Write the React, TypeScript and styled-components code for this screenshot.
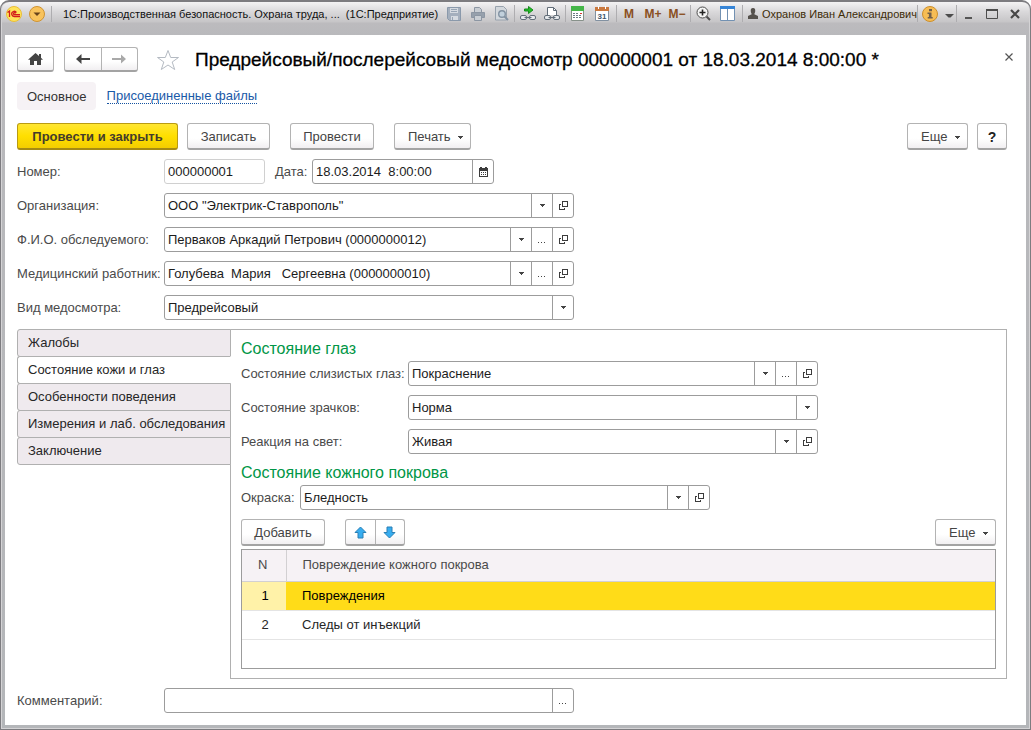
import React, { useState } from "react";
import styled, { createGlobalStyle, css } from "styled-components";

const GlobalStyle = createGlobalStyle`
  *, *::before, *::after { box-sizing: border-box; }
  html, body { margin: 0; padding: 0; background: #fff; }
  body, button, input, select, table {
    font-family: "Liberation Sans", Arial, sans-serif;
    font-size: 13px;
    line-height: 16px;
  }
  button, input, select { margin: 0; }
  svg { display: block; }
`;

/* ---------- window frame ---------- */

const Frame = styled.div`
  min-height: 100vh;
  display: flex;
  flex-direction: column;
  padding: 0 4px 4px;
  border: 1px solid #7d7c80;
  border-top-width: 2px;
  border-radius: 9px 9px 0 0;
  background: linear-gradient(#f4f3f4 0, #d9d8da 10px, #c6c5c7 20px, #bcbbbe 21px, #b9b9bc 33px, #b4b6b9 100%);
  box-shadow: inset 1px 0 0 #d4d3d5, inset -1px -1px 0 #d4d3d5;
`;

const TitleBar = styled.header`
  display: flex;
  align-items: center;
  height: 33px;
  padding-bottom: 10px;
  color: #111;
  font-size: 11px;
  line-height: 16px;
`;

const Brand = styled.div`
  display: flex;
  align-items: center;
  gap: 7px;
  padding: 0 6px 0 1px;
  border-right: 1px solid #aeadb0;
`;

const WindowTitle = styled.div`
  flex: 1;
  min-width: 0;
  padding-left: 11px;
  overflow: hidden;
  white-space: pre;
`;

const ToolGroup = styled.div<{ $before?: number; $after?: number }>`
  display: flex;
  align-items: center;
  height: 17px;
  padding: 0 ${(p) => p.$after ?? 0}px 0 ${(p) => p.$before ?? 0}px;
  border-right: 1px solid #aeadb0;
`;

const ToolButton = styled.button<{ $w?: number }>`
  display: flex;
  align-items: center;
  justify-content: center;
  width: ${(p) => p.$w ?? 24}px;
  height: 18px;
  padding: 0;
  border: 0;
  background: none;
  color: #8a4f22;
  font-size: 12px;
  font-weight: bold;
  line-height: 16px;
`;

const UserButton = styled.button`
  display: flex;
  align-items: center;
  gap: 4px;
  padding: 0 0 0 5px;
  border: 0;
  background: none;
  color: #3d2c08;
  font-size: 11px;
  white-space: nowrap;
`;

const WindowControls = styled.div`
  display: flex;
`;

const Content = styled.main`
  flex: 1;
  display: flex;
  flex-direction: column;
  padding: 12px 19px 12px 12px;
  background: #fff;
`;

/* ---------- header of the form ---------- */

const HeadRow = styled.div`
  display: flex;
  align-items: center;
  height: 25px;
`;

const raised = css`
  border: 1px solid #b3b3b3;
  border-bottom: 2px solid #a3a3a3;
  border-radius: 3px;
  background: linear-gradient(#fff 0, #fff 60%, #f1eff1 100%);
  color: #444;
`;

const IconButton = styled.button`
  ${raised}
  display: flex;
  align-items: center;
  justify-content: center;
  width: 37px;
  height: 25px;
  padding: 0;
`;

const Segment = styled.div<{ $tall?: boolean }>`
  ${raised}
  display: flex;
  width: ${(p) => (p.$tall ? 60 : 74)}px;
  height: ${(p) => (p.$tall ? 27 : 25)}px;
  margin-left: ${(p) => (p.$tall ? 20 : 10)}px;
`;

const SegmentButton = styled.button`
  flex: 1;
  display: flex;
  align-items: center;
  justify-content: center;
  padding: 0;
  border: 0;
  background: none;
  & + & { border-left: 1px solid #b3b3b3; }
`;

const StarButton = styled.button`
  margin: 0 15px 0 18px;
  padding: 0;
  border: 0;
  background: none;
`;

const Title = styled.h1`
  flex: 1;
  margin: 0;
  color: #000;
  font-size: 19px;
  font-weight: normal;
  line-height: 24px;
  white-space: nowrap;
  -webkit-text-stroke: 0.3px #000;
`;

const CloseButton = styled.button`
  margin: 0 -6px 6px 0;
  padding: 0;
  border: 0;
  background: none;
`;

const Sections = styled.nav`
  display: flex;
  align-items: center;
  gap: 11px;
  margin-top: 10px;
`;

const CurrentSection = styled.span`
  padding: 7px 9px 5px 10px;
  border-radius: 4px;
  background: #f6f2f5;
  color: #333;
`;

const SectionLink = styled.a`
  border-bottom: 1px dotted #1452a0;
  color: #1a5aa8;
  line-height: 14px;
  text-decoration: none;
`;

/* ---------- buttons ---------- */

const CommandBar = styled.div`
  display: flex;
  align-items: center;
  gap: 20px;
  margin-top: 13px;
`;

const CommandPair = styled.div`
  display: flex;
  gap: 9px;
`;

const Push = styled(CommandPair)`
  margin-left: auto;
`;

const Button = styled.button<{ $w: number; $primary?: boolean }>`
  ${raised}
  display: flex;
  align-items: center;
  justify-content: center;
  gap: 7px;
  min-width: ${(p) => p.$w}px;
  height: 27px;
  padding: 2px 0 0;
  white-space: nowrap;
  ${(p) =>
    p.$primary &&
    css`
      border-color: #b99b12;
      border-bottom-color: #a58a14;
      background: linear-gradient(#ffe632, #ffdf00 50%, #f3cd00);
      color: #443c2c;
      font-weight: bold;
    `}
`;

const MenuButton = styled(Button)`
  padding: 2px 7px 0 13px;
  justify-content: space-between;
`;

const HelpButton = styled(Button)`
  font-size: 14px;
  font-weight: bold;
  color: #222;
`;

/* ---------- fields ---------- */

const Fields = styled.div`
  display: flex;
  flex-direction: column;
  gap: 9px;
`;

const TopFields = styled(Fields)`
  margin-top: 9px;
`;

const Row = styled.div<{ $label: number }>`
  display: grid;
  grid-template-columns: ${(p) => p.$label}px minmax(0, 1fr);
  align-items: center;
`;

const Label = styled.label`
  color: #4a4a4a;
  white-space: nowrap;
`;

const Box = styled.div<{ $w?: number; $dim?: boolean }>`
  display: flex;
  width: 100%;
  max-width: ${(p) => p.$w ?? 410}px;
  height: 25px;
  border: 1px solid ${(p) => (p.$dim ? "#d0d0d0" : "#9c9c9c")};
  border-radius: 3px;
  background: #fff;
`;

const Input = styled.input`
  flex: 1;
  min-width: 0;
  padding: 0 3px;
  border: 0;
  outline: 0;
  background: none;
  color: #1c1c1c;
  white-space: pre;
`;

const BoxButton = styled.button`
  display: flex;
  align-items: center;
  justify-content: center;
  width: 21px;
  padding: 0;
  border: 0;
  border-left: 1px solid #9c9c9c;
  background: none;
  color: #444;
`;

const ChoiceBox = styled(Box)`
  display: grid;
  grid-template-columns: minmax(0, 1fr) 21px;
`;

const Select = styled.select`
  grid-area: 1 / 1 / 2 / 3;
  padding: 0 24px 0 3px;
  border: 0;
  outline: 0;
  appearance: none;
  background: none;
  color: #1c1c1c;
`;

const ChoiceMark = styled.span`
  grid-area: 1 / 2 / 2 / 3;
  display: flex;
  align-items: center;
  justify-content: center;
  border-left: 1px solid #9c9c9c;
  pointer-events: none;
`;

const Inline = styled.div`
  display: flex;
  align-items: center;
`;

const DateLabel = styled(Label)`
  width: 47px;
  padding-left: 10px;
`;

/* ---------- tabs ---------- */

const Tabbed = styled.section`
  display: flex;
  align-items: stretch;
  margin-top: 9px;
`;

const TabList = styled.div`
  display: flex;
  flex-direction: column;
  flex: none;
  width: 214px;
  margin-right: -1px;
  z-index: 1;
`;

const Tab = styled.button<{ $active: boolean }>`
  height: 28px;
  margin-bottom: -1px;
  padding: 0 0 1px 10px;
  border: 1px solid #b0b0b0;
  border-right-color: ${(p) => (p.$active ? "#fff" : "#b0b0b0")};
  border-radius: 3px 0 0 3px;
  background: ${(p) => (p.$active ? "#fff" : "#efeaee")};
  color: #262626;
  text-align: left;
  white-space: nowrap;
`;

const Panel = styled.div`
  flex: 1;
  min-width: 0;
  padding: 9px 10px 9px;
  border: 1px solid #b0b0b0;
`;

const GroupTitle = styled.h2`
  margin: 0;
  color: #009646;
  font-size: 16px;
  font-weight: normal;
  line-height: 20px;
`;

const GroupBody = styled(Fields)<{ $gap: number }>`
  margin: 2px 0 ${(p) => p.$gap}px;
`;

const TableBar = styled.div`
  display: flex;
  align-items: center;
`;

/* ---------- table ---------- */

const TableFrame = styled.div`
  height: 120px;
  margin-top: 3px;
  border: 1px solid #9c9c9c;
`;

const Table = styled.table`
  width: 100%;
  border-collapse: collapse;
  table-layout: fixed;
`;

const Th = styled.th<{ $num?: boolean }>`
  width: ${(p) => (p.$num ? "44px" : "auto")};
  height: 31px;
  padding: ${(p) => (p.$num ? "0 2px 0 0" : "0 16px")};
  border-bottom: 1px solid #d2d0d2;
  border-right: ${(p) => (p.$num ? "1px solid #d2d0d2" : "0")};
  background: #f6f2f5;
  color: #4a4a4a;
  font-weight: normal;
  text-align: ${(p) => (p.$num ? "center" : "left")};
`;

const Tr = styled.tr<{ $selected: boolean }>`
  height: 29px;
  border-bottom: 1px solid #e4e4e4;
  background: ${(p) => (p.$selected ? "#ffdc18" : "#fff")};
  color: ${(p) => (p.$selected ? "#000" : "#262626")};
  & > td:first-child {
    padding: 0 0 0 2px;
    background: ${(p) => (p.$selected ? "#fff2a8" : "#fff")};
    text-align: center;
  }
`;

const Td = styled.td`
  padding: 0 16px;
`;

const CommentRow = styled(Row)`
  margin-top: 9px;
`;

/* ---------- drawings ---------- */

const Caret = () => (
  <svg width="5" height="3" viewBox="0 0 5 3" fill="#444" shapeRendering="crispEdges">
    <path d="M0 0h5v1h-1v1h-1v1h-1v-1h-1v-1h-1z" />
  </svg>
);

const OpenIcon = () => (
  <svg width="9" height="9" viewBox="0 0 9 9" fill="none" stroke="#3c3c3c" shapeRendering="crispEdges">
    <path d="M3.5 .5h5v5h-5zM2 3.500h-1.500v5h5v-1.500" />
  </svg>
);

const Dots = () => (
  <svg width="8" height="7" viewBox="0 0 8 7" fill="#444" shapeRendering="crispEdges">
    <path d="M0 6h1v1h-1zM3 6h1v1h-1zM6 6h1v1h-1z" />
  </svg>
);

const CalendarIcon = () => (
  <svg width="9" height="10" viewBox="0 0 9 10" fill="#3c3c3c" shapeRendering="crispEdges">
    <path d="M0 1h1v-1h2v1h3v-1h2v1h1v9h-9zM1 4v5h7v-5z" fillRule="evenodd" />
    <path d="M2 5h1v1h-1zM4 5h1v1h-1zM6 5h1v1h-1zM2 7h1v1h-1zM4 7h1v1h-1zM6 7h1v1h-1z" />
  </svg>
);

const HomeIcon = () => (
  <svg width="15" height="12" viewBox="0 0 15 12" fill="#444">
    <path d="M7.500 0L11 3V1h2v3.800L15 6.700H13V12H9V8H6v4H2V6.700H0z" />
  </svg>
);

const ArrowLeft = () => (
  <svg width="14" height="10" viewBox="0 0 14 10" fill="#444">
    <path d="M0 5L5.500 0V4H14V6H5.500V10z" />
  </svg>
);

const ArrowRight = () => (
  <svg width="14" height="10" viewBox="0 0 14 10" fill="#a9a9a9">
    <path d="M14 5L9 0.500V4H0V6H9V9.500z" />
  </svg>
);

const StarIcon = () => (
  <svg width="24" height="22" viewBox="0 0 24 22" fill="none" stroke="#b4bac2">
    <path d="M12 1.500L14.700 8.500H22.500L16.200 13L18.700 20.500L12 16L5.300 20.500L7.800 13L1.500 8.500H9.300z" />
  </svg>
);

const CrossIcon = () => (
  <svg width="8" height="8" viewBox="0 0 8 8" stroke="#555" strokeWidth="1.200">
    <path d="M.5 .5L7.500 7.500M7.500 .5L.5 7.500" />
  </svg>
);

const BlueUp = () => (
  <svg width="13" height="13" viewBox="0 0 13 13" fill="#37adf0" stroke="#2a7fb4">
    <path d="M6.500 1L12 6.500H9V12H4V6.500H1z" />
  </svg>
);

const BlueDown = () => (
  <svg width="13" height="13" viewBox="0 0 13 13" fill="#37adf0" stroke="#2a7fb4">
    <path d="M6.500 12L12 6.500H9V1H4V6.500H1z" />
  </svg>
);

const LogoIcon = () => (
  <svg width="16" height="16" viewBox="0 0 16 16">
    <circle cx="8" cy="8" r="7.500" fill="#ffe45a" stroke="#e9bd3a" />
    <path d="M1.500 6.500L3.500 5V11M10.500 6.500A2.600 2.600 0 1 0 8.500 10.500H14M9.500 7.500A1 1 0 1 0 8.500 8.700H14" fill="none" stroke="#d3201c" strokeWidth="1.300" />
  </svg>
);

const MenuIcon = () => (
  <svg width="16" height="16" viewBox="0 0 16 16">
    <circle cx="8" cy="8" r="7.500" fill="#f8c35c" stroke="#cf9331" />
    <path d="M4.500 6.500H11.500L8 10z" fill="#67431a" />
  </svg>
);

const SaveIcon = () => (
  <svg width="14" height="14" viewBox="0 0 14 14">
    <path d="M.5 .5h13v13h-11l-2-2z" fill="#a4afbd" stroke="#8a99ab" />
    <path d="M3 1h8v5h-8zM4 9h7v4h-7z" fill="#d5dae0" />
    <path d="M4 2.500h6M4 4.500h6M5.500 10v3" stroke="#98a5b5" />
  </svg>
);

const PrintIcon = () => (
  <svg width="14" height="14" viewBox="0 0 14 14" fill="#c9ced4" stroke="#8c96a3">
    <path d="M3.500 5.500v-5h5l2 2v3" />
    <path d="M.5 5.500h13v5h-13z" fill="#96a0ac" />
    <path d="M3.500 8.500h7v5h-7z" />
  </svg>
);

const PreviewIcon = () => (
  <svg width="15" height="15" viewBox="0 0 15 15" fill="none" stroke="#98a2ad">
    <path d="M1.500 .5h8l3 3v10.500h-11z" fill="#d3d8dd" />
    <circle cx="8" cy="8" r="3.300" fill="#c1d0dc" stroke="#8292a2" strokeWidth="1.400" />
    <path d="M10.500 10.500L14 14" stroke="#8292a2" strokeWidth="2" />
  </svg>
);

const ChainIcon = () => (
  <svg width="16" height="16" viewBox="0 0 16 16" fill="none" stroke="#626d78">
    <path d="M4.500 3h4v-2.500l4.500 3.500-4.500 3.500v-2.500h-4z" fill="#23bd28" stroke="#168c1c" />
    <rect x=".5" y="9.500" width="6" height="4" rx="1.500" fill="#e6e9ec" />
    <rect x="9.500" y="9.500" width="6" height="4" rx="1.500" fill="#e6e9ec" />
    <path d="M4.500 11.500h7" />
  </svg>
);

const DocChainIcon = () => (
  <svg width="16" height="16" viewBox="0 0 16 16" fill="none" stroke="#626d78">
    <path d="M3.500 9v-7.500h6l3 3v4.500" fill="#fff" />
    <path d="M9.500 1.500v3h3" />
    <rect x=".5" y="9.500" width="6" height="4" rx="1.500" fill="#e6e9ec" />
    <rect x="9.500" y="9.500" width="6" height="4" rx="1.500" fill="#e6e9ec" />
    <path d="M4.500 11.500h7" />
  </svg>
);

const CalcIcon = () => (
  <svg width="13" height="15" viewBox="0 0 13 15">
    <path d="M.5 .5h12v14h-12z" fill="#fff" stroke="#87918a" />
    <path d="M0 0h13v5h-13z" fill="#45b649" />
    <path d="M2 7h2v1h-2zM5 7h2v1h-2zM2 9h2v1h-2zM5 9h2v1h-2zM2 11h2v1h-2zM5 11h2v1h-2zM8 9h2v1h-2zM8 11h2v1h-2z" fill="#6d7b86" />
    <path d="M9 7h2v1h-2z" fill="#d23a2a" />
  </svg>
);

const DateIcon = () => (
  <svg width="14" height="15" viewBox="0 0 14 15">
    <path d="M.5 1.500h13v13h-13z" fill="#fff" stroke="#8291a1" />
    <path d="M0 1h14v4h-14z" fill="#c9783e" />
    <path d="M3 0h1v3h-1zM10 0h1v3h-1z" fill="#fff" />
    <text x="7" y="13" textAnchor="middle" fontSize="8" fontFamily="Liberation Sans" fill="#41566b">31</text>
  </svg>
);

const ZoomIcon = () => (
  <svg width="15" height="15" viewBox="0 0 15 15" fill="none" stroke="#4d4d4d">
    <circle cx="6.500" cy="6.500" r="5.500" fill="#f5f5f5" />
    <path d="M3.500 6.500h6M6.500 3.500v6" stroke="#222" strokeWidth="1.600" />
    <path d="M10.500 10.500L14 14" strokeWidth="2" />
  </svg>
);

const PanesIcon = () => (
  <svg width="15" height="15" viewBox="0 0 15 15">
    <path d="M.5 .5h14v14h-14z" fill="#fff" stroke="#7291b2" />
    <path d="M0 0h15v3h-15z" fill="#3684d6" />
    <path d="M7.500 3v12" stroke="#7291b2" />
  </svg>
);

const UserIcon = () => (
  <svg width="10" height="11" viewBox="0 0 10 11" fill="#55514c">
    <path d="M5 0C7 0 7.500 1.500 7.200 3.500C7 5 6.300 5.800 6.300 6.300L10 8V11H0V8L3.700 6.300C3.700 5.800 3 5 2.800 3.500C2.500 1.500 3 0 5 0z" />
  </svg>
);

const InfoIcon = () => (
  <svg width="16" height="16" viewBox="0 0 16 16">
    <circle cx="8" cy="8" r="7.500" fill="#f7bd54" stroke="#cc8f2c" />
    <path d="M7 3h3v2.200h-3zM5.500 6.500h4v4.500h1.200v1.500h-5v-1.500h1.200v-3h-1.400z" fill="#73604a" />
  </svg>
);

const BigCaret = () => (
  <svg width="9" height="9" viewBox="0 0 9 9" fill="#4c4c4c">
    <path d="M0 5h9L5.500 8.500h-2z" />
  </svg>
);

const MinIcon = () => (
  <svg width="12" height="12" viewBox="0 0 12 12" fill="#555">
    <path d="M2 9h7v2h-7z" />
  </svg>
);

const MaxIcon = () => (
  <svg width="12" height="10" viewBox="0 0 12 10" fill="none" stroke="#4d4d4d">
    <path d="M.5 1h11v8.500h-11z" />
    <path d="M0 1h12" strokeWidth="2" />
  </svg>
);

const ExitIcon = () => (
  <svg width="10" height="10" viewBox="0 0 10 10" stroke="#474747" strokeWidth="2.200">
    <path d="M1 1L9 9M9 1L1 9" />
  </svg>
);

/* ---------- composed fields ---------- */

type Extra = "list" | "pick" | "open";

const extras: Record<Extra, { name: string; icon: React.ReactNode }> = {
  list: { name: "Выбрать из списка", icon: <Caret /> },
  pick: { name: "Выбрать", icon: <Dots /> },
  open: { name: "Открыть", icon: <OpenIcon /> },
};

const LookupBox = ({ id, value, buttons }: { id: string; value: string; buttons: Extra[] }) => (
  <Box>
    <Input id={id} defaultValue={value} />
    {buttons.map((b) => (
      <BoxButton key={b} type="button" aria-label={extras[b].name}>
        {extras[b].icon}
      </BoxButton>
    ))}
  </Box>
);

const Lookup = (p: { id: string; label: string; width: number; value: string; buttons: Extra[] }) => (
  <Row $label={p.width}>
    <Label htmlFor={p.id}>{p.label}</Label>
    <LookupBox id={p.id} value={p.value} buttons={p.buttons} />
  </Row>
);

const Choice = (p: { id: string; label: string; width: number; value: string }) => (
  <Row $label={p.width}>
    <Label htmlFor={p.id}>{p.label}</Label>
    <ChoiceBox>
      <Select id={p.id} defaultValue={p.value}>
        <option>{p.value}</option>
      </Select>
      <ChoiceMark>
        <Caret />
      </ChoiceMark>
    </ChoiceBox>
  </Row>
);

const tabs = [
  "Жалобы",
  "Состояние кожи и глаз",
  "Особенности поведения",
  "Измерения и лаб. обследования",
  "Заключение",
];

const damages = ["Повреждения", "Следы от инъекций"];

export default function App() {
  const [tab, setTab] = useState(1);
  const [row, setRow] = useState(0);

  return (
    <>
      <GlobalStyle />
      <Frame>
        <TitleBar>
          <Brand>
            <LogoIcon />
            <MenuIcon />
          </Brand>
          <WindowTitle>{"1С:Производственная безопасность. Охрана труда, ...  (1С:Предприятие)"}</WindowTitle>
          <ToolGroup $before={2}>
            <ToolButton aria-label="Сохранить"><SaveIcon /></ToolButton>
            <ToolButton aria-label="Печать"><PrintIcon /></ToolButton>
            <ToolButton aria-label="Просмотр"><PreviewIcon /></ToolButton>
          </ToolGroup>
          <ToolGroup $before={1} $after={1}>
            <ToolButton aria-label="Перейти по ссылке"><ChainIcon /></ToolButton>
            <ToolButton aria-label="Получить ссылку"><DocChainIcon /></ToolButton>
          </ToolGroup>
          <ToolGroup $after={2}>
            <ToolButton aria-label="Калькулятор"><CalcIcon /></ToolButton>
            <ToolButton aria-label="Календарь"><DateIcon /></ToolButton>
          </ToolGroup>
          <ToolGroup $after={1}>
            <ToolButton>M</ToolButton>
            <ToolButton>M+</ToolButton>
            <ToolButton>M−</ToolButton>
          </ToolGroup>
          <ToolGroup $before={1} $after={2}>
            <ToolButton aria-label="Масштаб"><ZoomIcon /></ToolButton>
            <ToolButton aria-label="Панели"><PanesIcon /></ToolButton>
          </ToolGroup>
          <ToolGroup>
            <UserButton>
              <UserIcon />
              Охранов Иван Александрович
            </UserButton>
          </ToolGroup>
          <ToolGroup>
            <ToolButton aria-label="Информация"><InfoIcon /></ToolButton>
            <ToolButton $w={14} aria-label="Ещё"><BigCaret /></ToolButton>
          </ToolGroup>
          <WindowControls>
            <ToolButton $w={23} aria-label="Свернуть"><MinIcon /></ToolButton>
            <ToolButton $w={23} aria-label="Развернуть"><MaxIcon /></ToolButton>
            <ToolButton $w={23} aria-label="Закрыть окно"><ExitIcon /></ToolButton>
          </WindowControls>
        </TitleBar>

        <Content>
          <HeadRow>
            <IconButton aria-label="Начальная страница"><HomeIcon /></IconButton>
            <Segment>
              <SegmentButton aria-label="Назад"><ArrowLeft /></SegmentButton>
              <SegmentButton aria-label="Вперёд"><ArrowRight /></SegmentButton>
            </Segment>
            <StarButton aria-label="В избранное"><StarIcon /></StarButton>
            <Title>Предрейсовый/послерейсовый медосмотр 000000001 от 18.03.2014 8:00:00 *</Title>
            <CloseButton aria-label="Закрыть"><CrossIcon /></CloseButton>
          </HeadRow>

          <Sections>
            <CurrentSection>Основное</CurrentSection>
            <SectionLink href="#files">Присоединенные файлы</SectionLink>
          </Sections>

          <CommandBar>
            <CommandPair>
              <Button $w={161} $primary>Провести и закрыть</Button>
              <Button $w={83}>Записать</Button>
            </CommandPair>
            <Button $w={84}>Провести</Button>
            <MenuButton $w={75}>Печать<Caret /></MenuButton>
            <Push>
              <MenuButton $w={61}>Еще<Caret /></MenuButton>
              <HelpButton $w={30}>?</HelpButton>
            </Push>
          </CommandBar>

          <TopFields>
            <Row $label={147}>
              <Label htmlFor="number">Номер:</Label>
              <Inline>
                <Box $w={101} $dim>
                  <Input id="number" defaultValue="000000001" />
                </Box>
                <DateLabel htmlFor="date">Дата:</DateLabel>
                <Box $w={182}>
                  <Input id="date" defaultValue="18.03.2014  8:00:00" />
                  <BoxButton aria-label="Выбрать дату"><CalendarIcon /></BoxButton>
                </Box>
              </Inline>
            </Row>
            <Lookup id="org" label="Организация:" width={147} value={'ООО "Электрик-Ставрополь"'} buttons={["list", "open"]} />
            <Lookup id="person" label="Ф.И.О. обследуемого:" width={147} value="Перваков Аркадий Петрович (0000000012)" buttons={["list", "pick", "open"]} />
            <Lookup id="medic" label="Медицинский работник:" width={147} value="Голубева  Мария   Сергеевна (0000000010)" buttons={["list", "pick", "open"]} />
            <Choice id="kind" label="Вид медосмотра:" width={147} value="Предрейсовый" />
          </TopFields>

          <Tabbed>
            <TabList role="tablist" aria-orientation="vertical">
              {tabs.map((name, i) => (
                <Tab key={name} role="tab" aria-selected={i === tab} $active={i === tab} onClick={() => setTab(i)}>
                  {name}
                </Tab>
              ))}
            </TabList>
            <Panel role="tabpanel">
              <GroupTitle>Состояние глаз</GroupTitle>
              <GroupBody $gap={9}>
                <Lookup id="mucosa" label="Состояние слизистых глаз:" width={167} value="Покраснение" buttons={["list", "pick", "open"]} />
                <Choice id="pupils" label="Состояние зрачков:" width={167} value="Норма" />
                <Lookup id="light" label="Реакция на свет:" width={167} value="Живая" buttons={["list", "open"]} />
              </GroupBody>
              <GroupTitle>Состояние кожного покрова</GroupTitle>
              <GroupBody $gap={9}>
                <Lookup id="colour" label="Окраска:" width={59} value="Бледность" buttons={["list", "open"]} />
              </GroupBody>
              <TableBar>
                <Button $w={84}>Добавить</Button>
                <Segment $tall>
                  <SegmentButton aria-label="Переместить вверх"><BlueUp /></SegmentButton>
                  <SegmentButton aria-label="Переместить вниз"><BlueDown /></SegmentButton>
                </Segment>
                <Push>
                  <MenuButton $w={61}>Еще<Caret /></MenuButton>
                </Push>
              </TableBar>
              <TableFrame>
                <Table>
                  <thead>
                    <tr>
                      <Th $num scope="col">N</Th>
                      <Th scope="col">Повреждение кожного покрова</Th>
                    </tr>
                  </thead>
                  <tbody>
                    {damages.map((name, i) => (
                      <Tr key={name} $selected={i === row} onClick={() => setRow(i)}>
                        <Td>{i + 1}</Td>
                        <Td>{name}</Td>
                      </Tr>
                    ))}
                  </tbody>
                </Table>
              </TableFrame>
            </Panel>
          </Tabbed>

          <CommentRow $label={147}>
            <Label htmlFor="comment">Комментарий:</Label>
            <LookupBox id="comment" value="" buttons={["pick"]} />
          </CommentRow>
        </Content>
      </Frame>
    </>
  );
}
